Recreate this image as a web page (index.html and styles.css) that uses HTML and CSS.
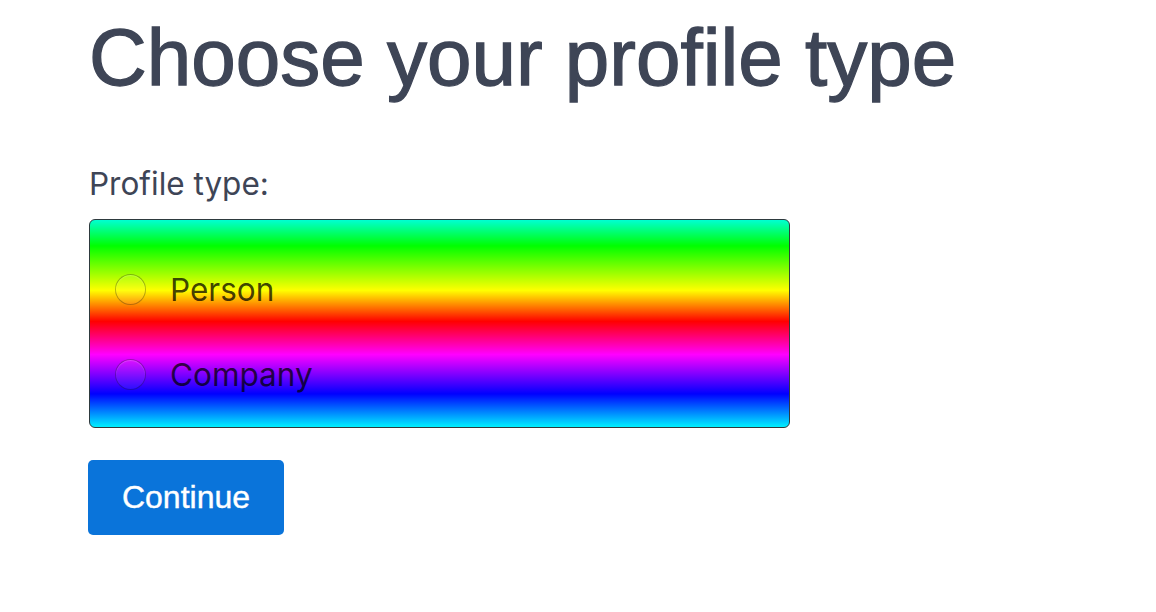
FILE: index.html
```html
<!DOCTYPE html>
<html lang="en">
<head>
<meta charset="utf-8">
<title>Choose your profile type</title>
<link rel="stylesheet" href="styles.css">
</head>
<body>
<main class="page">
  <h1 class="title">Choose your profile type</h1>
  <form class="form">
    <div class="field-label">Profile type:</div>
    <div class="options">
      <label class="option"><input class="radio" type="radio" name="type" value="person"><span class="option-text">Person</span></label>
      <label class="option"><input class="radio" type="radio" name="type" value="company"><span class="option-text">Company</span></label>
    </div>
    <div class="actions">
      <button class="btn" type="button">Continue</button>
    </div>
  </form>
</main>
</body>
</html>
```

FILE: styles.css
```css
html, body {
  margin: 0;
  background: #ffffff;
}
.page {
  padding-left: 89px;
  display: flex;
  flex-direction: column;
  font-family: "Liberation Sans", Arial, sans-serif;
  color: #3e4556;
}
.title {
  margin: 18px 0 0;
  font-family: "Liberation Sans", Arial, sans-serif;
  font-size: 80px;
  line-height: 80px;
  font-weight: normal;
  color: #3e4556;
  -webkit-text-stroke: 1.3px #3e4556;
}
.form {
  display: flex;
  flex-direction: column;
  margin-top: 68px;
}
.field-label {
  font-family: Inter, "Noto Sans", sans-serif;
  font-size: 31.5px;
  line-height: 36px;
  color: #3e4556;
}
.options {
  box-sizing: border-box;
  margin-top: 17px;
  width: 701px;
  height: 209px;
  border: 1px solid #2e3a3e;
  border-radius: 6px;
  padding: 27px 24px 0 25px;
  display: flex;
  flex-direction: column;
  background: linear-gradient(to bottom,
    #00ffd2 0%,
    #00ff00 12.5%,
    #ffff00 34%,
    #ff0000 49%,
    #ff00ff 65%,
    #0000ff 84%,
    #00f0ff 100%);
}
.option {
  display: flex;
  align-items: center;
  gap: 24px;
  height: 85px;
}
.radio {
  appearance: none;
  -webkit-appearance: none;
  margin: 0;
  flex: none;
  width: 31px;
  height: 31px;
  border-radius: 50%;
  border: 1px solid rgba(0, 0, 0, 0.28);
  background: rgba(255, 255, 255, 0.06);
  box-shadow: inset 0 1px 1px rgba(255, 255, 255, 0.2);
}
.option-text {
  font-family: Inter, "Noto Sans", sans-serif;
  font-size: 31.5px;
  color: rgba(0, 0, 0, 0.74);
}
.actions {
  margin-top: 32px;
  margin-left: -1px;
}
.btn {
  font-family: "Liberation Sans", Arial, sans-serif;
  font-size: 32px;
  color: #ffffff;
  -webkit-text-stroke: 0.4px #ffffff;
  background: #0a74da;
  border: none;
  border-radius: 5px;
  width: 196px;
  height: 75px;
  padding: 0;
}
```
